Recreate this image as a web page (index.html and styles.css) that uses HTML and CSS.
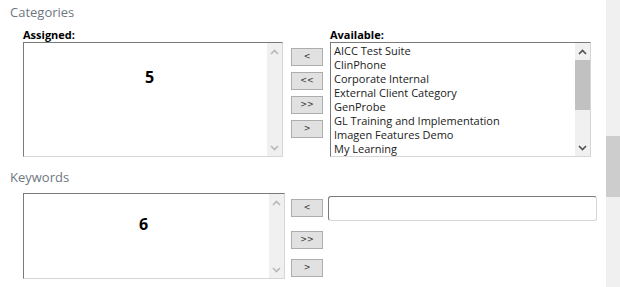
FILE: index.html
```html
<!DOCTYPE html>
<html lang="en">
<head>
  <meta charset="UTF-8" />
  <title>Categories and Keywords</title>
  <link rel="stylesheet" href="styles.css">
</head>
<body>
  <div class="page">
    <main class="main">

      <section class="group">
        <h2 class="group-title">Categories</h2>
        <div class="picker">
          <div class="col">
            <label class="col-label">Assigned:</label>
            <div class="listbox listbox-assigned">
              <div class="list-items">
                <div class="marker">5</div>
              </div>
              <div class="vscroll disabled">
                <span class="arrow up"><svg width="9" height="6" viewBox="0 0 9 6"><polyline points="1,5 4.5,1.5 8,5" /></svg></span>
                <span class="track"></span>
                <span class="arrow down"><svg width="9" height="6" viewBox="0 0 9 6"><polyline points="1,1 4.5,4.5 8,1" /></svg></span>
              </div>
            </div>
          </div>

          <div class="buttons">
            <button class="move">&lt;</button>
            <button class="move">&lt;&lt;</button>
            <button class="move">&gt;&gt;</button>
            <button class="move">&gt;</button>
          </div>

          <div class="col">
            <label class="col-label">Available:</label>
            <div class="listbox listbox-available">
              <ul class="list-items options">
                <li>AICC Test Suite</li>
                <li>ClinPhone</li>
                <li>Corporate Internal</li>
                <li>External Client Category</li>
                <li>GenProbe</li>
                <li>GL Training and Implementation</li>
                <li>Imagen Features Demo</li>
                <li>My Learning</li>
              </ul>
              <div class="vscroll">
                <span class="arrow up"><svg width="9" height="6" viewBox="0 0 9 6"><polyline points="1,5 4.5,1.5 8,5" /></svg></span>
                <span class="track"><span class="thumb"></span></span>
                <span class="arrow down"><svg width="9" height="6" viewBox="0 0 9 6"><polyline points="1,1 4.5,4.5 8,1" /></svg></span>
              </div>
            </div>
          </div>
        </div>
      </section>

      <section class="group group-keywords">
        <h2 class="group-title">Keywords</h2>
        <div class="picker picker-keywords">
          <div class="listbox listbox-keywords">
            <div class="list-items">
              <div class="marker marker-6">6</div>
            </div>
            <div class="vscroll disabled">
              <span class="arrow up"><svg width="9" height="6" viewBox="0 0 9 6"><polyline points="1,5 4.5,1.5 8,5" /></svg></span>
              <span class="track"></span>
              <span class="arrow down"><svg width="9" height="6" viewBox="0 0 9 6"><polyline points="1,1 4.5,4.5 8,1" /></svg></span>
            </div>
          </div>

          <div class="buttons buttons-keywords">
            <button class="move">&lt;</button>
            <button class="move">&gt;&gt;</button>
            <button class="move">&gt;</button>
          </div>

          <input class="keyword-input" type="text" />
        </div>
      </section>

    </main>

    <div class="page-scroll">
      <span class="page-thumb"></span>
    </div>
  </div>
</body>
</html>
```

FILE: styles.css
```css
* { box-sizing: border-box; }
html, body {
  margin: 0;
  height: 100%;
  overflow: hidden;
}
body {
  font-family: 'Open Sans', 'Liberation Sans', sans-serif;
  background: #fff;
  color: #000;
}

.page {
  display: flex;
  height: 287px;
}
.main {
  flex: 1;
  padding-left: 10px;
}

.page-scroll {
  width: 14px;
  background: #f0f0f0;
  padding-top: 136px;
}
.page-thumb {
  display: block;
  height: 61px;
  background: #cdcdcd;
}

.group-keywords {
  margin-top: 8px;
}

.group-title {
  margin: 0;
  font-size: 13px;
  font-weight: 400;
  line-height: 18px;
  color: #6f7780;
  padding-top: 3px;
}

.picker {
  display: flex;
  align-items: flex-start;
  padding-left: 13px;
}

.col-label {
  display: block;
  font-size: 11px;
  font-weight: 700;
  line-height: 15px;
  margin-top: 6px;
  color: #000;
}

.listbox {
  display: flex;
  border: 1px solid;
  border-color: #7a7a7a #d6d6d6 #d6d6d6 #7a7a7a;
  background: #fff;
}
.listbox-assigned {
  width: 260px;
  height: 115px;
}
.listbox-available {
  width: 261px;
  height: 115px;
}
.listbox-keywords {
  width: 262px;
  height: 86px;
  margin-top: 7px;
}

.list-items {
  flex: 1;
  margin: 0;
  padding: 0;
  list-style: none;
}
.options {
  padding: 1px 0 0 3px;
  font-size: 11px;
  line-height: 14px;
  color: #1a1a1a;
  overflow: hidden;
}
.options li {
  height: 14px;
  white-space: nowrap;
}

.marker {
  text-align: center;
  font-size: 16px;
  font-weight: 700;
  line-height: 20px;
  padding: 24px 0 0 8px;
}
.marker-6 {
  padding: 20px 6px 0 0;
}

.vscroll {
  width: 15px;
  display: flex;
  flex-direction: column;
  background: #f0f0f0;
}
.vscroll .arrow {
  height: 17px;
  display: flex;
  align-items: center;
  justify-content: center;
}
.vscroll .track {
  flex: 1;
}
.vscroll .thumb {
  display: block;
  height: 50px;
  background: #c1c1c1;
}
.vscroll polyline {
  fill: none;
  stroke: #505050;
  stroke-width: 1.6;
}
.vscroll.disabled polyline {
  stroke: #b8b8b8;
}

.buttons {
  display: flex;
  flex-direction: column;
  gap: 6px;
  margin: 27px 7px 0 8px;
}
.buttons-keywords {
  margin: 13px 5px 0 6px;
  gap: 14px 0;
}
.buttons-keywords .move:nth-child(3) {
  margin-top: -4px;
}

.move {
  width: 32px;
  height: 18px;
  padding: 0;
  background: #e1e1e1;
  border: 1px solid #adadad;
  border-radius: 0;
  font-family: 'DejaVu Sans', sans-serif;
  font-size: 8px;
  line-height: 16px;
  color: #333;
}

.keyword-input {
  width: 269px;
  height: 25px;
  margin-top: 10px;
  border: 1px solid;
  border-color: #7a7a7a #d6d6d6 #d6d6d6 #7a7a7a;
  border-radius: 3px;
  background: #fff;
}
```
